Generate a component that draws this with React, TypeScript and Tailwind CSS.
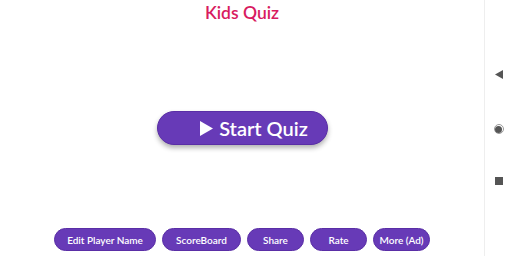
import React from 'react';

const links = [
  { label: 'Edit Player Name', w: 'w-[102px]' },
  { label: 'ScoreBoard', w: 'w-[79px]' },
  { label: 'Share', w: 'w-[57px]' },
  { label: 'Rate', w: 'w-[57px]' },
  { label: 'More (Ad)', w: 'w-[57px]' },
];

export default function App() {
  return (
    <div className="flex h-[256px] w-[512px] bg-white font-['Lato',sans-serif]">
      <div className="flex w-[484px] flex-col items-center">
        <h1 className="mt-[2px] text-[17.5px] leading-[22px] font-semibold text-[#d81b60]">Kids Quiz</h1>
        <div className="flex flex-1 items-center justify-center pt-[4px]">
          <button className="flex h-[34px] w-[171px] items-center justify-center gap-[6px] rounded-full border border-[#5a2ea6] bg-[#673ab7] pl-[24px] text-white shadow-[0_3px_5px_rgba(0,0,0,0.3)]">
            <svg width="13" height="15" viewBox="0 0 13 15">
              <path d="M0 0 L13 7.5 L0 15 Z" fill="white" />
            </svg>
            <span className="text-[20px] leading-none font-semibold">Start Quiz</span>
          </button>
        </div>
        <div className="mb-[5px] flex gap-[6px]">
          {links.map((l) => (
            <button
              key={l.label}
              className={`${l.w} h-[23px] rounded-full border border-[#5a2ea6] bg-[#673ab7] text-[10px] leading-none font-semibold text-white`}
            >
              {l.label}
            </button>
          ))}
        </div>
      </div>
      <div className="flex w-[28px] flex-col items-center border-l border-[#eeeeee] pt-[70px]">
        <svg width="8" height="9" viewBox="0 0 8 9">
          <path d="M8 0 L0 4.5 L8 9 Z" fill="#555" />
        </svg>
        <div className="mt-[45px] flex h-[10px] w-[10px] items-center justify-center rounded-full border border-[#999]">
          <div className="h-[7px] w-[7px] rounded-full bg-[#555]" />
        </div>
        <div className="mt-[43px] h-[8px] w-[8px] bg-[#555]" />
      </div>
    </div>
  );
}
